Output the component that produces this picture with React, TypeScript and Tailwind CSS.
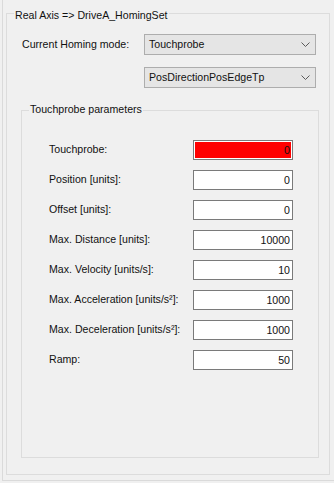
const params = [
  { label: "Touchprobe:", value: "0", alert: true },
  { label: "Position [units]:", value: "0" },
  { label: "Offset [units]:", value: "0" },
  { label: "Max. Distance [units]:", value: "10000" },
  { label: "Max. Velocity [units/s]:", value: "10" },
  { label: "Max. Acceleration [units/s²]:", value: "1000" },
  { label: "Max. Deceleration [units/s²]:", value: "1000" },
  { label: "Ramp:", value: "50" },
];

function Chevron() {
  return (
    <svg width="9" height="6" viewBox="0 0 9 6" aria-hidden="true">
      <polyline points="0.5,0.5 4.5,4.5 8.5,0.5" fill="none" stroke="#5a5a5a" strokeWidth="1" />
    </svg>
  );
}

function Combo({ value }: { value: string }) {
  return (
    <div className="flex h-[21px] w-[172px] items-center justify-between border border-[#adadad] bg-[#e5e5e5] pl-[4px] pr-[5px]">
      <span>{value}</span>
      <Chevron />
    </div>
  );
}

function Field({ value, alert }: { value: string; alert?: boolean }) {
  if (alert) {
    return (
      <div className="h-[20px] w-[100px] border border-[#7a7a7a] bg-white p-[1px]">
        <div className="flex h-full items-center justify-end bg-[#ff0000] pr-[1px] leading-none">{value}</div>
      </div>
    );
  }
  return (
    <div className="flex h-[20px] w-[100px] items-center justify-end border border-[#7a7a7a] bg-white pr-[2px] leading-none">
      {value}
    </div>
  );
}

export default function App() {
  return (
    <div className="h-[483px] w-[334px] overflow-hidden bg-[#f0f0f0] pl-[2px] font-['Liberation_Sans',Arial,sans-serif] text-[10.6px] text-[#111]">
      <div className="h-[481px] border-b border-l border-[#dadada] pl-[3px] pt-[13px]">
        <div className="relative h-[462px] w-[324px] border border-[#dcdcdc]">
          <span className="absolute -top-[5px] left-[7px] bg-[#f0f0f0] px-[1px] leading-[13px]">
            Real Axis =&gt; DriveA_HomingSet
          </span>

          <div className="flex items-center pl-[15px] pt-[20px]">
            <span className="w-[122px]">Current Homing mode:</span>
            <Combo value="Touchprobe" />
          </div>
          <div className="mt-[12px] pl-[137px]">
            <Combo value="PosDirectionPosEdgeTp" />
          </div>

          <div className="relative ml-[14px] mt-[22px] h-[348px] w-[298px] border border-[#dcdcdc]">
            <span className="absolute -top-[8px] left-[7px] bg-[#f0f0f0] px-[1px] leading-[13px]">
              Touchprobe parameters
            </span>
            <div className="flex flex-col gap-[10px] pl-[27px] pt-[29px]">
              {params.map((p) => (
                <div key={p.label} className="flex h-[20px] items-center">
                  <span className="w-[144px]">{p.label}</span>
                  <Field value={p.value} alert={p.alert} />
                </div>
              ))}
            </div>
          </div>
        </div>
      </div>
    </div>
  );
}
